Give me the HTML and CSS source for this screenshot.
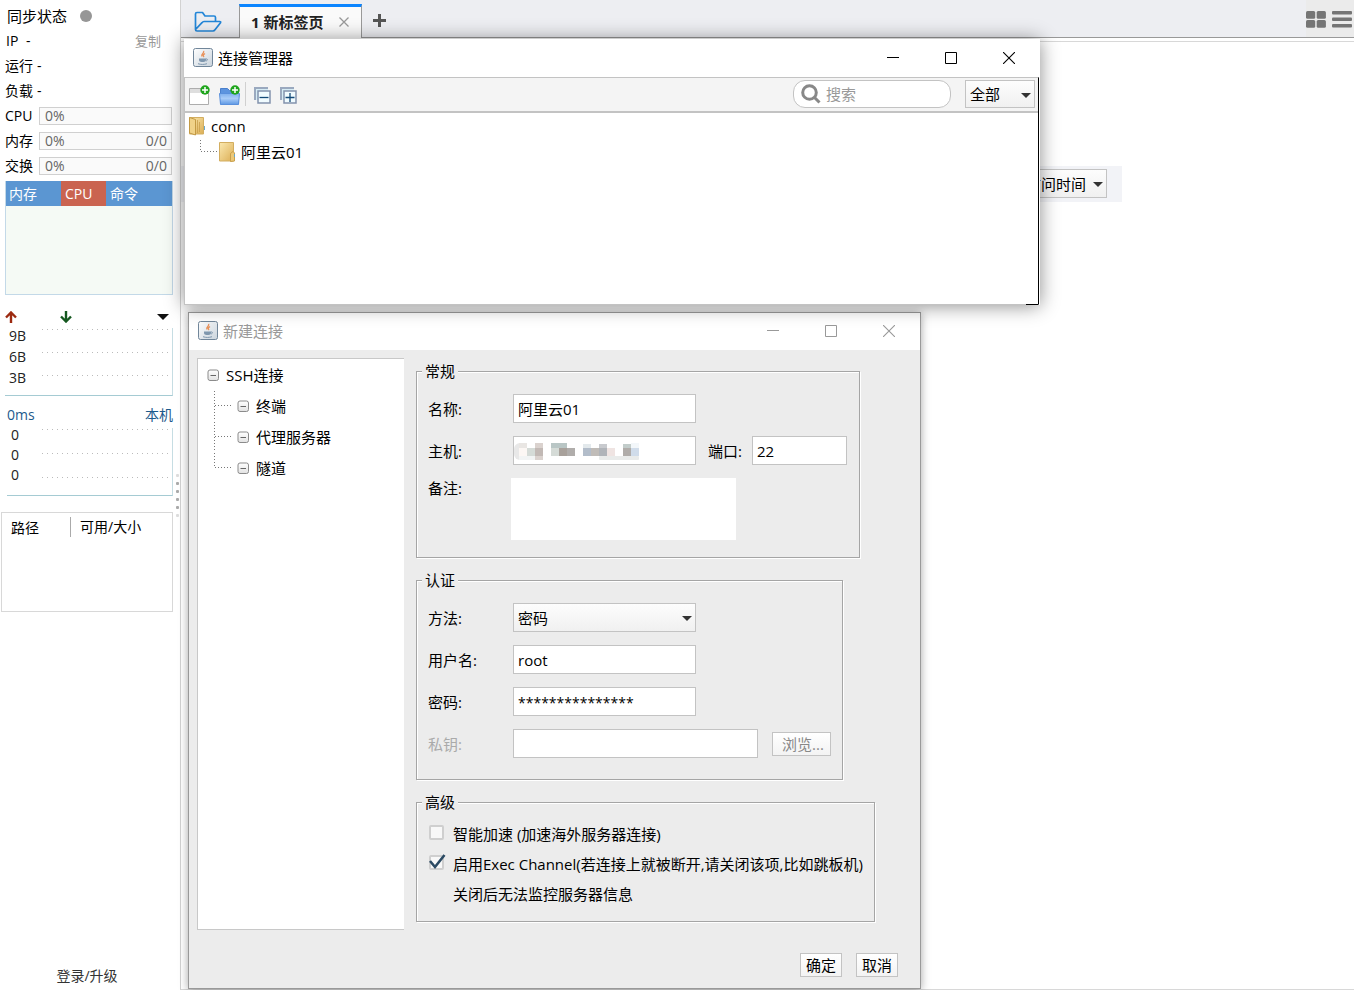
FILE: index.html
```html
<!DOCTYPE html>
<html lang="zh-CN">
<head>
<meta charset="utf-8">
<title>连接管理器</title>
<link rel="stylesheet" href="styles.css">
</head>
<body>
<svg class="defs" aria-hidden="true">
  <defs>
    <linearGradient id="g-java" x1="0" y1="0" x2="1" y2="1"><stop offset="0" stop-color="#fff"/><stop offset="1" stop-color="#c9d3dc"/></linearGradient>
    <linearGradient id="g-folder" x1="0" y1="0" x2="1" y2="1"><stop offset="0" stop-color="#fbe9b0"/><stop offset="1" stop-color="#dcae55"/></linearGradient>
    <linearGradient id="g-blue" x1="0" y1="0" x2="0" y2="1"><stop offset="0" stop-color="#7fb0ee"/><stop offset=".45" stop-color="#a9ccf8"/><stop offset="1" stop-color="#5e98e4"/></linearGradient>
    <linearGradient id="g-box" x1="0" y1="0" x2="0" y2="1"><stop offset="0" stop-color="#fff"/><stop offset="1" stop-color="#e2e2e2"/></linearGradient>
    <symbol id="java" viewBox="0 0 20 20">
      <rect x=".5" y=".5" width="19" height="18" rx="2" fill="url(#g-java)" stroke="#71869a"/>
      <path d="M10.500 3c1.500 2-3 3-1.500 5.500M12 5.500c-1.500 1-2.500 2-1 3.500" fill="none" stroke="#e8915a" stroke-width="1.400"/>
      <path d="M6 10.500h7v1.500c0 1-1 2-2.500 2h-2c-1.500 0-2.500-1-2.500-2z" fill="#7f97ae"/>
      <path d="M13 11c2-.5 2 1.500 0 2M5 15.700c3 1 6 1 9 0" fill="none" stroke="#7f97ae"/>
    </symbol>
    <symbol id="minus" viewBox="0 0 12 12">
      <rect x="1" y="1" width="10.500" height="10.500" rx="2" fill="url(#g-box)" stroke="#8b8b8b"/>
      <path d="M3.500 6.500h5.500" stroke="#666"/>
    </symbol>
    <symbol id="folder-closed" viewBox="0 0 18 22">
      <path d="M1.500 1.500h14v18.500h-14z" fill="url(#g-folder)" stroke="#d3ae60"/>
      <path d="M12.500 20.500v-8l2.500-2 1.500 1.500v8z" fill="#ecc877" stroke="#c9a04c"/>
      <path d="M16.500 13v3" stroke="#6aa7c8"/>
    </symbol>
    <symbol id="folder-open" viewBox="0 0 18 20">
      <path d="M1.500 1.500h14v16.500h-14z" fill="url(#g-folder)" stroke="#d3ae60"/>
      <path d="M1.500 1.500l6 2v15.500l-6-2z" fill="#f0d289" stroke="#c39a45"/>
      <path d="M9.500 4v13M11.500 6v10" stroke="#c9a04c" stroke-width=".8"/>
      <path d="M16.500 10v4" stroke="#6aa7c8"/>
    </symbol>
    <symbol id="plus-badge" viewBox="0 0 10 10">
      <circle cx="5" cy="5" r="4.700" fill="#1fa51c"/><path d="M5 2v6M2 5h6" stroke="#fff" stroke-width="1.500"/>
    </symbol>
    <symbol id="w-min" viewBox="0 0 12 12"><path d="M0 5.500h12" stroke="currentColor"/></symbol>
    <symbol id="w-max" viewBox="0 0 12 12"><path d="M.5.5h11v11H.5z" fill="none" stroke="currentColor"/></symbol>
    <symbol id="w-close" viewBox="0 0 12 12"><path d="M0 0l12 12M12 0L0 12" stroke="currentColor" stroke-width="1.100"/></symbol>
  </defs>
</svg>

<div class="app">
  <aside class="sidebar">
    <div class="stat stat--title">同步状态<span class="status-dot"></span></div>
    <div class="stat"><span class="stat__ip">IP</span>-<button class="copy" type="button">复制</button></div>
    <div class="stat">运行<span class="stat__dash">-</span></div>
    <div class="stat">负载<span class="stat__dash">-</span></div>
    <div class="stat"><span class="stat__name">CPU</span><div class="meter"><span>0%</span></div></div>
    <div class="stat"><span class="stat__name">内存</span><div class="meter"><span>0%</span><span>0/0</span></div></div>
    <div class="stat"><span class="stat__name">交换</span><div class="meter"><span>0%</span><span>0/0</span></div></div>

    <div class="procs">
      <table>
        <thead><tr><th class="procs__mem">内存</th><th class="procs__cpu">CPU</th><th>命令</th></tr></thead>
      </table>
    </div>

    <div class="net-head">
      <svg width="12" height="12" viewBox="0 0 12 12"><path d="M6 12V2M1 6.500L6 1.500l5 5" fill="none" stroke="#9c2a10" stroke-width="2.400"/></svg>
      <svg width="12" height="12" viewBox="0 0 12 12"><path d="M6 0v10M1 5.500l5 5 5-5" fill="none" stroke="#14571f" stroke-width="2.400"/></svg>
      <svg class="net-head__menu" width="12" height="6" viewBox="0 0 12 6"><path d="M0 0h12L6 6z" fill="#111"/></svg>
    </div>
    <div class="graph">
      <ol class="graph__labels"><li>9B</li><li>6B</li><li>3B</li></ol>
      <div class="graph__lines"><i></i><i></i><i></i></div>
    </div>
    <div class="ping-head"><span>0ms</span><span>本机</span></div>
    <div class="graph graph--ping">
      <ol class="graph__labels"><li>0</li><li>0</li><li>0</li></ol>
      <div class="graph__lines"><i></i><i></i><i></i></div>
    </div>

    <div class="disks">
      <table><thead><tr><th class="disks__path"><span>路径</span></th><th>可用/大小</th></tr></thead></table>
    </div>
    <a class="login" href="#">登录/升级</a>
  </aside>
  <div class="splitter"><i></i><i></i><i></i><i></i><i></i><i></i></div>

  <main class="main">
    <nav class="tabs">
      <button class="tabs__folder" type="button" aria-label="打开">
        <svg width="28" height="22" viewBox="0 0 28 22"><path d="M1.500 18.500V3q0-1.500 1.500-1.500h5.500l2.500 3.500h9q1.500 0 1.500 1.500v4M1.500 18.500q0 1.500 1.500 1.500h16q1.200 0 2-1.200l5.500-7q.6-1.300-.9-1.300H10q-1.200 0-2 1.200z" fill="none" stroke="#2386d8" stroke-width="1.700" stroke-linejoin="round"/></svg>
      </button>
      <div class="tab"><span>1 新标签页</span>
        <button class="tab__close" type="button" aria-label="关闭标签"><svg width="10" height="10" viewBox="0 0 10 10"><path d="M.5.5l9 9M9.500.5l-9 9" stroke="#999" stroke-width="1.300"/></svg></button>
      </div>
      <button class="tabs__add" type="button" aria-label="新建标签"><svg width="13" height="13" viewBox="0 0 13 13"><path d="M6.500 0v13M0 6.500h13" stroke="#555" stroke-width="3"/></svg></button>
      <div class="tabs__views">
        <button type="button" aria-label="网格"><svg width="20" height="17" viewBox="0 0 20 17" fill="#757575"><rect width="9.200" height="7.800" rx="1.500"/><rect x="10.700" width="9.200" height="7.800" rx="1.500"/><rect y="9" width="9.200" height="7.800" rx="1.500"/><rect x="10.700" y="9" width="9.200" height="7.800" rx="1.500"/></svg></button>
        <button type="button" aria-label="列表"><svg width="20" height="17" viewBox="0 0 20 17" fill="#757575"><rect width="20" height="3.500" rx="1"/><rect y="6.500" width="20" height="3.500" rx="1"/><rect y="13" width="20" height="3.500" rx="1"/></svg></button>
      </div>
    </nav>
    <div class="page">
      <div class="sortbar">
        <div class="select select--sort"><select aria-label="排序"><option>访问时间</option></select></div>
      </div>
    </div>

    <section class="window window--editor">
      <header class="titlebar titlebar--inactive">
        <svg width="20" height="20"><use href="#java"/></svg><h2>新建连接</h2>
        <button type="button" aria-label="最小化"><svg width="12" height="12"><use href="#w-min"/></svg></button>
        <button type="button" aria-label="最大化"><svg width="12" height="12"><use href="#w-max"/></svg></button>
        <button type="button" aria-label="关闭"><svg width="12" height="12"><use href="#w-close"/></svg></button>
      </header>
      <form class="editor">
        <div class="editor__body">
          <ul class="categories">
            <li class="categories__root"><svg width="12" height="12"><use href="#minus"/></svg>SSH连接</li>
            <li><svg class="branch" width="17" height="31"><path d="M.5 1v30M1 15.500h16"/></svg><svg width="12" height="12"><use href="#minus"/></svg>终端</li>
            <li><svg class="branch" width="17" height="31"><path d="M.5 1v30M1 15.500h16"/></svg><svg width="12" height="12"><use href="#minus"/></svg>代理服务器</li>
            <li><svg class="branch" width="17" height="31"><path d="M.5 1v15M1 15.500h16"/></svg><svg width="12" height="12"><use href="#minus"/></svg>隧道</li>
          </ul>
          <div class="groups">
            <fieldset>
              <legend>常规</legend>
              <div class="fields">
                <div class="field"><label for="name">名称:</label><input id="name" type="text" value="阿里云01"></div>
                <div class="field"><label for="host">主机:</label>
                  <div class="host"><input id="host" type="text">
                    <svg class="host__mask" width="127" height="20" viewBox="0 0 127 20">
                      <rect width="12" height="17" y="1" rx="6" fill="#e8e8e8"/><rect x="5" y="1" width="8" height="5" fill="#e9e6e3"/><rect x="5" y="6" width="8" height="8" fill="#fcf7f4"/><rect x="13" y="6" width="8" height="8" fill="#d5dbd7"/><rect x="21" y="1" width="8" height="17" fill="#dad2ce"/><rect x="21" y="6" width="8" height="8" fill="#c2b9b5"/><rect x="5" y="14" width="16" height="4" fill="#f2f4f4"/>
                      <rect x="37" y="1" width="16" height="5" fill="#b9c6c5"/><rect x="37" y="6" width="8" height="8" fill="#d5dbd7"/><rect x="45" y="6" width="8" height="8" fill="#a8a19b"/><rect x="53" y="6" width="8" height="8" fill="#b0adab"/>
                      <rect x="69" y="2" width="8" height="4" fill="#e3e9ec"/><rect x="69" y="6" width="8" height="8" fill="#b3bdca"/><rect x="77" y="6" width="8" height="8" fill="#c0bcb8"/><rect x="85" y="2" width="8" height="4" fill="#c8cace"/><rect x="85" y="6" width="8" height="8" fill="#b0b4b9"/><rect x="93" y="6" width="8" height="8" fill="#efe4e2"/>
                      <rect x="109" y="2" width="8" height="4" fill="#c2ccca"/><rect x="109" y="6" width="8" height="8" fill="#b0aca9"/><rect x="117" y="1" width="8" height="5" fill="#f3f7fa"/><rect x="117" y="6" width="8" height="8" fill="#d0dcea"/><rect x="85" y="14" width="40" height="4" rx="1" fill="#e9ebea"/>
                    </svg>
                  </div>
                  <label class="port-label" for="port">端口:</label><input id="port" class="port" type="text" value="22"></div>
                <div class="field field--note"><label for="note">备注:</label><textarea id="note"></textarea></div>
              </div>
            </fieldset>
            <fieldset>
              <legend>认证</legend>
              <div class="fields fields--auth">
                <div class="field"><label for="method">方法:</label><div class="select"><select id="method"><option>密码</option></select></div></div>
                <div class="field"><label for="user">用户名:</label><input id="user" type="text" value="root"></div>
                <div class="field"><label for="pass">密码:</label><input id="pass" class="secret" type="text" value="***************"></div>
                <div class="field"><label class="off" for="key">私钥:</label><input id="key" class="key" type="text"><button class="btn browse" type="button" disabled>浏览...</button></div>
              </div>
            </fieldset>
            <fieldset>
              <legend>高级</legend>
              <div class="checks">
                <label><input type="checkbox">智能加速 (加速海外服务器连接)</label>
                <label><input type="checkbox" checked>启用Exec Channel(若连接上就被断开,请关闭该项,比如跳板机)</label>
                <p>关闭后无法监控服务器信息</p>
              </div>
            </fieldset>
          </div>
        </div>
        <footer class="actions"><button class="btn" type="button">确定</button><button class="btn" type="button">取消</button></footer>
      </form>
    </section>

    <section class="window window--manager">
      <header class="titlebar">
        <svg width="20" height="20"><use href="#java"/></svg><h2>连接管理器</h2>
        <button type="button" aria-label="最小化"><svg width="12" height="12"><use href="#w-min"/></svg></button>
        <button type="button" aria-label="最大化"><svg width="12" height="12"><use href="#w-max"/></svg></button>
        <button type="button" aria-label="关闭"><svg width="12" height="12"><use href="#w-close"/></svg></button>
      </header>
      <div class="manager">
        <div class="toolbar">
          <button type="button" aria-label="新建连接"><svg width="22" height="21" viewBox="0 0 22 21"><path d="M.5 3.500h19v16H.5z" fill="#fff" stroke="#adadad"/><path d="M1 4h18v4H1z" fill="#dedede"/><use href="#plus-badge" x="11" y="0" width="10" height="10"/></svg></button>
          <button type="button" aria-label="新建文件夹"><svg width="22" height="21" viewBox="0 0 22 21"><path d="M1.500 19V3.500h7l2 2h9V19z" fill="#5d94df" stroke="#4a80cc"/><path d="M.5 8.500h20L19.500 19.500h-18z" fill="url(#g-blue)" stroke="#5a90dc"/><use href="#plus-badge" x="11" y="0" width="10" height="10"/></svg></button>
          <span class="toolbar__sep"></span>
          <button type="button" aria-label="全部折叠"><svg width="17" height="17" viewBox="0 0 17 17"><path d="M1 13V1h13" fill="none" stroke="#9aa9bf" stroke-width="2"/><path d="M2 2h12v2H4v9H2z" fill="#d6ecf5"/><path d="M4 4h12v12H4z" fill="#f0fbff" stroke="#8292ad" stroke-width="1.500"/><path d="M5.500 10.500h9" stroke="#134a78" stroke-width="1.300"/></svg></button>
          <button type="button" aria-label="全部展开"><svg width="17" height="17" viewBox="0 0 17 17"><path d="M1 13V1h13" fill="none" stroke="#9aa9bf" stroke-width="2"/><path d="M2 2h12v2H4v9H2z" fill="#d6ecf5"/><path d="M4 4h12v12H4z" fill="#f0fbff" stroke="#8292ad" stroke-width="1.500"/><path d="M5.500 10.500h9M10 6v9" stroke="#134a78" stroke-width="1.300"/></svg></button>
          <label class="search"><svg width="20" height="20" viewBox="0 0 20 20"><circle cx="8.500" cy="8.500" r="6.800" fill="none" stroke="#888" stroke-width="3"/><path d="M13 13l5.500 5.500" stroke="#888" stroke-width="3"/></svg><input type="text" placeholder="搜索" aria-label="搜索"></label>
          <div class="select select--scope"><select aria-label="范围"><option>全部</option></select></div>
        </div>
        <ul class="conns">
          <li><svg width="18" height="20"><use href="#folder-open"/></svg>conn</li>
          <li class="conns__child"><svg class="branch" width="18" height="26"><path d="M.5 1v12M1 12.500h16"/></svg><svg width="18" height="22"><use href="#folder-closed"/></svg>阿里云01</li>
        </ul>
      </div>
    </section>
  </main>
</div>
</body>
</html>
```
FILE: styles.css
```css
* { box-sizing: border-box; }

body {
  margin: 0;
  background: #fff;
  color: #000;
  font: 15px/22px "Open Sans", "Noto Sans CJK SC", sans-serif;
}

ul, ol { margin: 0; padding: 0; list-style: none; }
p, h2 { margin: 0; font-size: 15px; font-weight: 400; }
svg { flex: none; display: block; }
input, select, textarea, button { font: inherit; color: inherit; }
button { padding: 0; border: 0; background: none; }
table { width: 100%; border-collapse: collapse; }
th { padding: 0; font-weight: 400; text-align: left; }
.defs { position: absolute; width: 0; height: 0; }

.app { display: flex; min-height: 100vh; }

/* Sidebar */
.sidebar {
  display: flex;
  flex-direction: column;
  flex: none;
  width: 174px;
  padding: 3px 1px 3px;
  font-size: 14px;
}
.stat { display: flex; align-items: center; height: 25px; padding: 0 1px 0 4px; }
.stat--title { padding-left: 6px; font-size: 15px; }
.status-dot { width: 12px; height: 12px; margin-left: 13px; border-radius: 50%; background: #969696; }
.stat__ip { width: 21px; padding-left: 1px; }
.stat__dash { margin-left: 4px; }
.stat__name { width: 34px; }
.copy { margin: 0 11px 0 auto; color: #999; font-size: 13px; }
.meter {
  display: flex;
  flex: 1;
  justify-content: space-between;
  height: 18px;
  padding: 0 4px 0 5px;
  border: 1px solid #d0d0d0;
  background: #fafafa;
  color: #666;
  line-height: 16px;
}

.procs { height: 114px; margin: 3px 0 0 4px; border: 1px solid #c3d9e8; border-top: 0; background: #f5faf5; }
.procs tr { height: 25px; background: #5b96d2; color: #fff; }
.procs th { padding-left: 4px; }
.procs .procs__mem { width: 55px; padding-left: 3px; }
.procs .procs__cpu { width: 45px; background: #ca6450; }

.net-head { display: flex; align-items: center; gap: 43px; height: 12px; margin: 16px 4px 0 4px; }
.net-head__menu { margin-left: auto; }

.graph {
  display: flex;
  height: 68px;
  margin: 5px 0 0 4px;
  border-right: 1px solid #c6dde3;
  border-bottom: 1px solid #a5cbd3;
}
.graph__labels { width: 37px; margin-top: -3px; padding-left: 4px; line-height: 21px; color: #222; }
.graph__lines { flex: 1; display: flex; flex-direction: column; gap: 22px; padding: 1px 2px 0 0; }
.graph__lines i { height: 1px; background: repeating-linear-gradient(90deg, #bbb 0 1px, transparent 1px 5px); }
.ping-head { display: flex; justify-content: space-between; margin: 8px 0 0 6px; color: #1d5a8c; }
.graph--ping { margin: 2px 0 0 6px; }
.graph--ping .graph__labels { width: 35px; line-height: 20px; }
.graph--ping .graph__lines { gap: 23px; }

.disks { height: 100px; margin-top: 16px; border: 1px solid #d8d8d8; }
.disks tr { height: 28px; }
.disks__path { width: 69px; padding-left: 9px; }
.disks__path span { display: block; height: 20px; border-right: 1px solid #aaa; line-height: 22px; }
.disks th + th { padding-left: 9px; }
.login { margin: auto auto 0; color: #333; text-decoration: none; }

.splitter { display: flex; flex-direction: column; flex: none; justify-content: center; align-items: center; gap: 5px; width: 6px; }
.splitter i { width: 3px; height: 3px; border-radius: 1px; background: #aaa; }
.splitter i:first-child, .splitter i:last-child { background: #ddd; }

/* Main area */
.main { position: relative; display: flex; flex: 1; flex-direction: column; min-width: 0; border-left: 1px solid #d2d2d2; }
.tabs { display: flex; height: 38px; border-bottom: 1px solid #999; background: #edeef2; }
.tabs__folder { display: grid; width: 58px; padding: 6px 4px 0 0; place-items: center; }
.tab {
  display: flex;
  align-items: center;
  gap: 13px;
  height: 34px;
  margin: 4px 0 -1px;
  padding: 0 12px 2px 11px;
  border: 1px solid #999;
  border-top: 3px solid #0a84ff;
  border-bottom: 0;
  background: #fafafa;
  font-weight: 700;
  color: #222;
}
.tab span { min-width: 75px; }
.tabs__add { display: grid; width: 34px; padding-top: 3px; place-items: center; }
.tabs__views { display: flex; align-items: center; gap: 6px; margin-left: auto; padding: 2px 2px 0 0; background: #ebebeb; }
.page { flex: 1; margin-top: 3px; border: solid #d8d8d8; border-width: 1px 0; }
.sortbar { display: flex; justify-content: flex-end; width: 941px; margin-top: 124px; padding: 3px 15px 4px; background: #f2f3f7; }

/* Controls */
.select { position: relative; width: 183px; height: 29px; }
.select select {
  width: 100%;
  height: 100%;
  padding: 0 20px 0 4px;
  border: 1px solid #c3c3c3;
  border-radius: 0;
  background: linear-gradient(#fdfdfd, #f0f0f0);
  appearance: none;
}
.select::after {
  content: "";
  position: absolute;
  top: 13px;
  right: 4px;
  border: 5px solid transparent;
  border-top-color: #333;
  border-bottom: 0;
  pointer-events: none;
}
.select--sort { width: 87px; }
.select--sort select { padding-left: 5px; padding-right: 0; }
.select--scope { width: 70px; }
.btn {
  height: 24px;
  padding: 0 5px;
  border: 1px solid #c3c3c3;
  background: linear-gradient(#fff, #f3f3f3);
}
.browse { margin-left: 14px; padding: 0 6px 0 9px; color: #888; }

/* Windows */
.window { position: absolute; }
.window--manager { top: 39px; left: 3px; width: 856px; background: #fff; box-shadow: 0 1px 18px rgba(0, 0, 0, .45); }
.window--editor { top: 312px; left: 7px; width: 733px; border: 1px solid #999; background: #ececec; box-shadow: 0 1px 9px rgba(0, 0, 0, .35); }
.titlebar { display: flex; align-items: center; height: 38px; padding: 0 2px 0 9px; background: #fff; }
.titlebar h2 { flex: 1; margin-left: 5px; }
.titlebar button { display: grid; width: 58px; height: 36px; place-items: center; }
.titlebar--inactive { height: 37px; padding-bottom: 2px; color: #999; }
.titlebar--inactive button { height: 34px; }

.manager { position: relative; border: 1px solid #c3c3c3; border-right: 1px solid #000; margin-right: 1px; }
.manager::after { content: ""; position: absolute; right: 0; bottom: -1px; width: 12px; height: 1px; background: #000; }
.toolbar { display: flex; align-items: center; height: 35px; padding: 0 3px 1px 4px; border-bottom: 2px solid #c3c3c3; background: #f4f4f4; }
.toolbar button { padding-top: 3px; }
.toolbar button + button { margin-left: 8px; }
.toolbar__sep { width: 1px; height: 24px; margin: 0 8px 0 4px; background: #d0d0d0; }
.toolbar__sep + button + button { margin-left: 9px; }
.search { display: flex; align-items: center; width: 158px; height: 28px; margin: 0 14px 0 auto; padding: 0 7px; border: 1px solid #c3c3c3; border-radius: 12px; background: #fff; }
.search input { width: 100%; min-width: 0; padding: 0 0 0 5px; border: 0; outline: 0; background: none; }
.search input::placeholder { color: #999; }
.toolbar .select { height: 28px; }
.conns { height: 191px; padding-left: 3px; }
.conns li { display: flex; align-items: center; gap: 5px; height: 26px; }
.conns .conns__child { gap: 0; padding-left: 12px; }
.conns__child svg + svg { margin-right: 5px; }
.branch path { fill: none; stroke: #777; stroke-dasharray: 1 2; }

/* Connection editor */
.editor__body { display: flex; padding: 8px; }
.categories { flex: none; width: 207px; height: 572px; padding: 0 0 0 9px; border: 1px solid #c8c8c8; border-right: 0; background: #fff; }
.categories li { display: flex; align-items: center; height: 31px; padding-left: 7px; }
.categories .categories__root { padding-left: 0; }
.categories .branch { margin-right: 6px; }
.categories svg:not(.branch) { margin-right: 7px; }
.groups { display: flex; flex-direction: column; align-items: flex-start; gap: 11px; margin: 2px 0 0 12px; }
fieldset { min-width: 0; margin: 0; padding: 0 8px 0 5px; border: 1px solid #a5a5a5; box-shadow: 1px 1px 0 #fff, inset 1px 1px 0 #fff; }
legend { padding: 0 3px; background: #ececec; }
.fields { display: flex; flex-direction: column; gap: 13px; padding: 12px 4px 17px 6px; }
.fields--auth { padding-right: 3px; padding-bottom: 21px; }
.field { display: flex; align-items: center; }
.field label { width: 85px; }
.field input { width: 183px; height: 29px; padding: 0 4px; border: 1px solid #c3c3c3; background: #fff; }
.field .off { color: #aaa; }
.field .port-label { width: 44px; margin-left: 12px; }
.field .port { width: 95px; }
.field .key { width: 245px; }
.field .secret { padding-top: 2px; font-size: 14px; }
.field--note { align-items: flex-start; }
.field--note label { width: 83px; line-height: 20px; }
.field textarea { width: 225px; height: 62px; border: 0; resize: none; background: #fff; }
.host { position: relative; }
.host__mask { position: absolute; top: 6px; left: 1px; }
.host input { display: block; }
.checks { padding: 6px 3px 12px 7px; }
.checks label { display: flex; align-items: center; height: 30px; }
.checks p { padding-left: 24px; line-height: 30px; }
.checks input {
  width: 15px;
  height: 15px;
  margin: 0 9px 3px 0;
  border: 2px solid #cfcfcf;
  border-radius: 2px;
  background: #f8f8f8;
  appearance: none;
}
.checks input:checked {
  width: 17px;
  height: 17px;
  margin-right: 7px;
  border: 0;
  background: url("data:image/svg+xml,%3Csvg xmlns='http://www.w3.org/2000/svg' viewBox='0 0 17 17'%3E%3Crect x='1' y='2' width='13' height='13' rx='1' fill='%23f8f8f8' stroke='%23cfcfcf' stroke-width='2'/%3E%3Cpath d='M1 7l5 6L15.500 1' fill='none' stroke='%232b4a63' stroke-width='2.600'/%3E%3C/svg%3E");
}
.actions { display: flex; justify-content: flex-end; gap: 14px; padding: 15px 22px 11px; }
```
